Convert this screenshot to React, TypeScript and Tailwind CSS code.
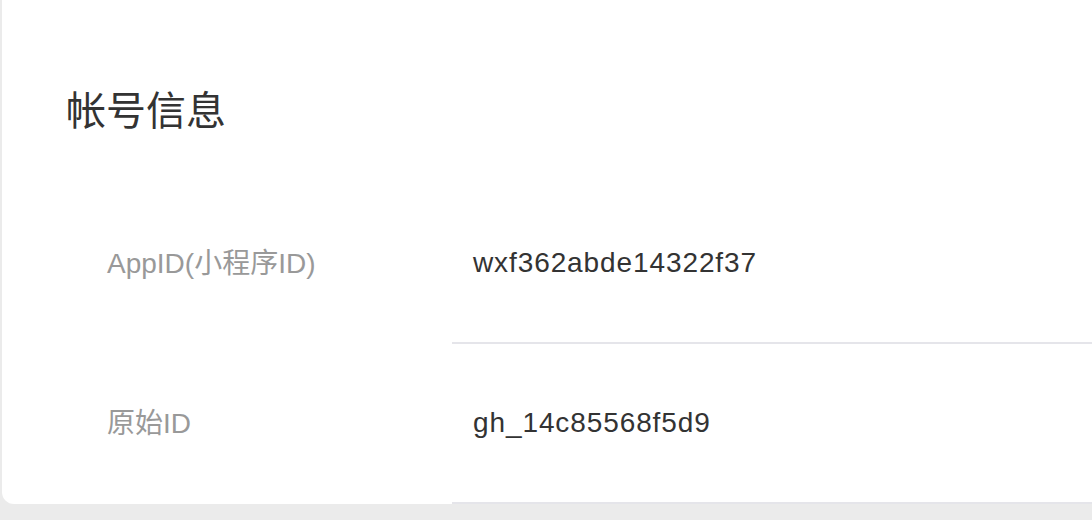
import React from "react";

const rows = [
  { label: "AppID(小程序ID)", value: "wxf362abde14322f37" },
  { label: "原始ID", value: "gh_14c85568f5d9" },
];

export default function App() {
  return (
    <div
      className="w-[1092px] h-[520px] overflow-hidden bg-[#ebebeb] pl-[2px]"
      style={{ fontFamily: '"Liberation Sans", "Noto Sans CJK SC", sans-serif' }}
    >
      <div className="h-[504px] bg-white rounded-bl-[12px] flex flex-col">
        {/* section title */}
        <div className="h-[184px] pl-[64px] pt-[88px]">
          <h2 className="text-[40px] leading-[46px] text-[#333333] font-normal">帐号信息</h2>
        </div>

        {rows.map((row) => (
          <div key={row.label} className="flex h-[160px]">
            <div className="w-[450px] shrink-0 pl-[105px] flex items-center text-[28px] text-[#999999]">
              {row.label}
            </div>
            <div className="flex-1 flex items-center pl-[21px] border-b-2 border-[#e5e5ea] text-[28px] tracking-[0.9px] text-[#333333]">
              {row.value}
            </div>
          </div>
        ))}
      </div>
    </div>
  );
}
